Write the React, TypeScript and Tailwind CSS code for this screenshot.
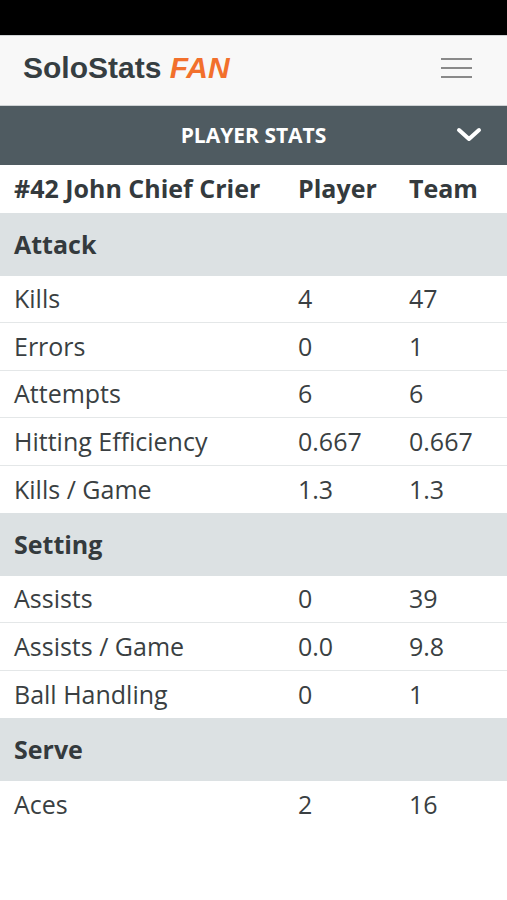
type Row = { label: string; player: string; team: string };
type Section = { title: string; rows: Row[] };

const sections: Section[] = [
  {
    title: "Attack",
    rows: [
      { label: "Kills", player: "4", team: "47" },
      { label: "Errors", player: "0", team: "1" },
      { label: "Attempts", player: "6", team: "6" },
      { label: "Hitting Efficiency", player: "0.667", team: "0.667" },
      { label: "Kills / Game", player: "1.3", team: "1.3" },
    ],
  },
  {
    title: "Setting",
    rows: [
      { label: "Assists", player: "0", team: "39" },
      { label: "Assists / Game", player: "0.0", team: "9.8" },
      { label: "Ball Handling", player: "0", team: "1" },
    ],
  },
  {
    title: "Serve",
    rows: [{ label: "Aces", player: "2", team: "16" }],
  },
];

function StatRow({ row, last }: { row: Row; last: boolean }) {
  return (
    <div
      className={`grid h-[47.5px] grid-cols-[284px_111px_1fr] items-center pl-[14px] text-[25px] text-[#3a3f42] ${
        last ? "" : "border-b border-[#e4e7e8]"
      }`}
    >
      <span>{row.label}</span>
      <span>{row.player}</span>
      <span>{row.team}</span>
    </div>
  );
}

export default function App() {
  return (
    <div className="min-h-[900px] w-[507px] bg-white font-['Open_Sans',sans-serif]">
      <div className="h-[35px] bg-black" />

      <header className="flex h-[71px] items-center justify-between border-y border-[#cfd3d5] bg-[#f8f8f8] pb-[6px] pl-[23px] pr-[35px]">
        <div className="font-['Liberation_Sans',Arial,sans-serif] text-[30px] font-bold">
          <span className="text-[#363e42]">SoloStats</span>{" "}
          <span className="italic text-[#f2702c]">FAN</span>
        </div>
        <div className="flex w-[31px] flex-col gap-[7px]">
          <span className="h-[2px] bg-[#8a8a8a]" />
          <span className="h-[2px] bg-[#8a8a8a]" />
          <span className="h-[2px] bg-[#8a8a8a]" />
        </div>
      </header>

      <div className="relative flex h-[59px] items-center justify-center bg-[#4f5b61]">
        <span className="text-[21px] font-bold text-white">PLAYER STATS</span>
        <svg
          className="absolute right-[25px] top-[19px] h-[20px] w-[26px]"
          viewBox="0 0 26 20"
          fill="none"
          stroke="white"
          strokeWidth="4"
          strokeLinecap="round"
          strokeLinejoin="round"
        >
          <path d="M3 5l10 9 10-9" />
        </svg>
      </div>

      <div className="grid h-[48px] grid-cols-[284px_111px_1fr] items-center pl-[14px] text-[25px] font-bold text-[#343a3d]">
        <span>#42 John Chief Crier</span>
        <span>Player</span>
        <span>Team</span>
      </div>

      {sections.map((s) => (
        <div key={s.title}>
          <div className="flex h-[62.5px] items-center bg-[#dce1e3] pl-[14px] text-[25px] font-bold text-[#343a3d]">
            {s.title}
          </div>
          {s.rows.map((r, i) => (
            <StatRow key={r.label} row={r} last={i === s.rows.length - 1} />
          ))}
        </div>
      ))}
    </div>
  );
}
